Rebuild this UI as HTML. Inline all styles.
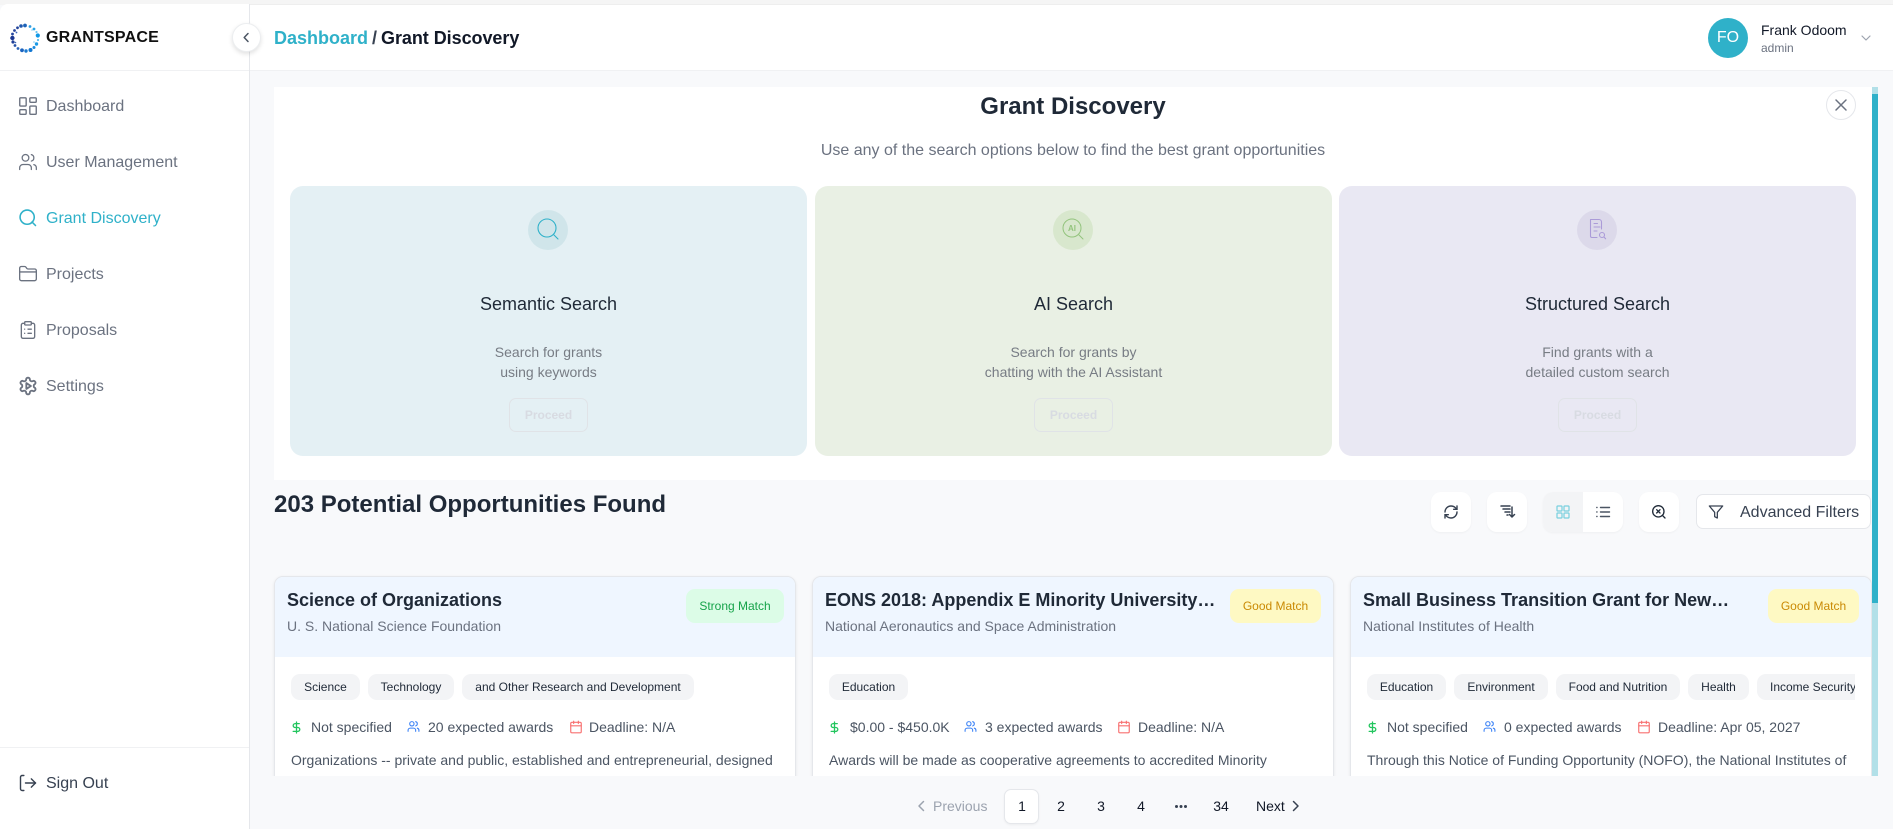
<!DOCTYPE html>
<html><head><meta charset="utf-8"><title>Grant Discovery</title>
<style>
*{box-sizing:border-box;margin:0;padding:0}
html,body{width:1893px;height:829px;overflow:hidden;background:#f8f9fb;font-family:"Liberation Sans",Arial,sans-serif}
.a{position:absolute;white-space:nowrap}
svg{position:absolute;fill:none;stroke-linecap:round;stroke-linejoin:round;overflow:visible}
.nav{left:46px;font-size:16px;line-height:24px;color:#6b7280}
.ico{stroke:#6b7280;stroke-width:2}
.sc{position:absolute;top:186px;height:270px;border-radius:13px}
.circ{position:absolute;top:24px;width:40px;height:40px;border-radius:50%}
.sct{position:absolute;left:0;right:0;top:106px;text-align:center;font-size:18px;line-height:24px;color:#1f2937}
.scd{position:absolute;left:0;right:0;top:156px;text-align:center;font-size:14px;line-height:20px;color:#777c84}
.pro{position:absolute;top:212px;height:34px;width:79px;border:1px solid #e0e3e7;border-radius:7px;text-align:center;font-size:12px;line-height:32px;color:#d8dbe2;font-weight:bold}
.tb{position:absolute;top:492px;width:40px;height:40px;background:#fff;border-radius:10px;box-shadow:0 1px 2px rgba(0,0,0,.04)}
.card{position:absolute;top:576px;height:220px;width:522px;background:#fff;border:1px solid #e5e7eb;border-radius:9px 9px 0 0;box-shadow:0 1px 3px rgba(0,0,0,.08)}
.hd{position:absolute;left:0;right:0;top:0;height:80px;background:#eff6ff;border-radius:8px 8px 0 0}
.t{position:absolute;top:12px;font-size:18px;line-height:22px;font-weight:bold;color:#1f2937;white-space:nowrap}
.ag{position:absolute;top:39px;font-size:14px;line-height:20px;color:#6b7280;white-space:nowrap}
.bd{position:absolute;top:12px;height:34px;border-radius:9px;font-size:12px;line-height:34px;text-align:center}
.s{background:#dcfce7;color:#16a34a}.g{background:#fef9c3;color:#ca8a04}
.tag{position:absolute;top:97px;height:26px;line-height:26px;background:#f3f4f6;border-radius:9px;font-size:12px;color:#1f2937;text-align:center;white-space:nowrap;overflow:hidden}
.m{position:absolute;top:140px;font-size:14px;line-height:20px;color:#4b5563;white-space:nowrap}
.d{position:absolute;top:173px;font-size:14px;line-height:20px;color:#4b5563;white-space:nowrap}
.p{position:absolute;top:794px;font-size:14px;line-height:24px;color:#111827;text-align:center;width:40px}
</style></head><body>
<div class="a" style="left:0;top:0;width:1893px;height:5px;background:#f5f5f5"></div>

<!-- sidebar -->
<div class="a" style="left:0;top:4px;width:250px;height:825px;background:#fff;border-right:1px solid #e5e7eb;border-top-left-radius:8px"></div>
<div class="a" style="left:250px;top:4px;width:1643px;height:67px;background:#fff;border-top:1px solid #eee"></div>
<div class="a" style="left:0;top:70px;width:249px;height:1px;background:#f0f1f3"></div>
<div class="a" style="left:250px;top:70px;width:1643px;height:1px;background:#f0f1f3"></div>

<!-- logo -->
<svg style="left:10px;top:23px" width="30" height="30" viewBox="0 0 30 30">
<g stroke="none">
<circle cx="15" cy="2.5" r="1.9" fill="#1d63b8"/><circle cx="20" cy="3.5" r="1.4" fill="#2f9be0"/><circle cx="24" cy="6" r="1.4" fill="#27a4e8"/><circle cx="26.5" cy="9" r="1.1" fill="#6cc4ee"/><circle cx="27.8" cy="12.5" r="2.1" fill="#0f97e6"/><circle cx="28" cy="17" r="1.1" fill="#56b9ec"/><circle cx="26.5" cy="21" r="1.7" fill="#1a9ae6"/><circle cx="24" cy="24.5" r="1.5" fill="#1889dd"/><circle cx="20.5" cy="27" r="2" fill="#1177d2"/><circle cx="16" cy="28" r="1.7" fill="#1a7ad0"/><circle cx="12" cy="27.3" r="1.9" fill="#1a63c0"/><circle cx="8" cy="25.5" r="1.4" fill="#2a63b6"/><circle cx="5" cy="22.5" r="1.4" fill="#2450a5"/><circle cx="3" cy="19" r="1.6" fill="#1f3f98"/><circle cx="2.4" cy="15" r="2.2" fill="#1c3791"/><circle cx="2.5" cy="11" r="1.4" fill="#26479f"/><circle cx="4.5" cy="7.5" r="1.4" fill="#27459c"/><circle cx="7.5" cy="4.8" r="1.4" fill="#25459c"/><circle cx="11" cy="3" r="1.8" fill="#1f57ad"/>
<circle cx="22" cy="7" r=".8" fill="#8fd3f2"/><circle cx="6.5" cy="9.5" r=".9" fill="#3b67b8"/><circle cx="5.5" cy="19.5" r=".8" fill="#3b67b8"/><circle cx="24" cy="19" r=".8" fill="#7cc8ee"/></g></svg>
<div class="a" style="left:46px;top:27.500px;font-size:16px;line-height:20px;font-weight:bold;color:#111;letter-spacing:.22px">GRANTSPACE</div>
<div class="a" style="left:231.500px;top:23px;width:29px;height:29px;border-radius:50%;background:#fff;border:1px solid #eceef0;box-shadow:0 2px 5px rgba(0,0,0,.12)"></div>
<svg style="left:239.500px;top:31px" width="13" height="13" viewBox="0 0 13 13"><path d="M8 2.500 4.200 6.500 8 10.500" stroke="#4b5563" stroke-width="1.500"/></svg>

<!-- nav -->
<svg class="ico" style="left:17px;top:95px" width="22" height="22" viewBox="0 0 24 24" stroke-width="1.500"><rect width="7" height="9" x="3" y="3" rx="1" stroke-width="1.500"/><rect width="7" height="5" x="14" y="3" rx="1" stroke-width="1.500"/><rect width="7" height="9" x="14" y="12" rx="1" stroke-width="1.500"/><rect width="7" height="5" x="3" y="16" rx="1" stroke-width="1.500"/></svg>
<div class="a nav" style="top:95px">Dashboard</div>
<svg style="left:18px;top:152px;stroke:#6b7280;stroke-width:1.500" width="20" height="20" viewBox="0 0 24 24"><path d="M16 21v-2a4 4 0 0 0-4-4H6a4 4 0 0 0-4 4v2"/><circle cx="9" cy="7" r="4"/><path d="M22 21v-2a4 4 0 0 0-3-3.870"/><path d="M16 3.130a4 4 0 0 1 0 7.750"/></svg>
<div class="a nav" style="top:151px">User Management</div>
<svg style="left:18px;top:208px;stroke:#2fb1c9;stroke-width:1.900" width="20" height="20" viewBox="0 0 24 24"><circle cx="11" cy="11" r="8.500"/><path d="m21 21-4.200-4.200"/></svg>
<div class="a nav" style="top:207px;color:#2fb1c9">Grant Discovery</div>
<svg style="left:18px;top:264px;stroke:#6b7280;stroke-width:1.600" width="20" height="20" viewBox="0 0 24 24"><path d="M20 20a2 2 0 0 0 2-2V8a2 2 0 0 0-2-2h-7.900a2 2 0 0 1-1.690-.9L9.600 3.900A2 2 0 0 0 7.930 3H4a2 2 0 0 0-2 2v13a2 2 0 0 0 2 2Z"/><path d="M2 9.500h20"/></svg>
<div class="a nav" style="top:263px">Projects</div>
<svg style="left:18px;top:320px;stroke:#6b7280;stroke-width:1.600" width="20" height="20" viewBox="0 0 24 24"><rect width="8" height="4" x="8" y="2" rx="1"/><path d="M16 4h2a2 2 0 0 1 2 2v14a2 2 0 0 1-2 2H6a2 2 0 0 1-2-2V6a2 2 0 0 1 2-2h2"/><path d="M12 11h4M12 16h4M8 11h.01M8 16h.01"/></svg>
<div class="a nav" style="top:319px">Proposals</div>
<svg style="left:18px;top:376px;stroke:#6b7280;stroke-width:2.200" width="20" height="20" viewBox="0 0 24 24"><path d="M12.220 2h-.44a2 2 0 0 0-2 2v.18a2 2 0 0 1-1 1.730l-.43.25a2 2 0 0 1-2 0l-.15-.08a2 2 0 0 0-2.730.73l-.22.38a2 2 0 0 0 .73 2.730l.15.1a2 2 0 0 1 1 1.720v.51a2 2 0 0 1-1 1.740l-.15.09a2 2 0 0 0-.73 2.730l.22.38a2 2 0 0 0 2.730.73l.15-.08a2 2 0 0 1 2 0l.43.25a2 2 0 0 1 1 1.730V20a2 2 0 0 0 2 2h.44a2 2 0 0 0 2-2v-.18a2 2 0 0 1 1-1.730l.43-.25a2 2 0 0 1 2 0l.15.08a2 2 0 0 0 2.730-.73l.22-.39a2 2 0 0 0-.73-2.730l-.15-.08a2 2 0 0 1-1-1.740v-.5a2 2 0 0 1 1-1.740l.15-.09a2 2 0 0 0 .73-2.730l-.22-.38a2 2 0 0 0-2.730-.73l-.15.08a2 2 0 0 1-2 0l-.43-.25a2 2 0 0 1-1-1.730V4a2 2 0 0 0-2-2z"/><path d="M10 8.500v7l5.500-3.500z"/></svg>
<div class="a nav" style="top:375px">Settings</div>

<div class="a" style="left:0;top:747px;width:249px;height:1px;background:#f0f1f3"></div>
<svg style="left:18px;top:773px;stroke:#374151;stroke-width:1.700" width="20" height="20" viewBox="0 0 24 24"><path d="M7 3H5a2 2 0 0 0-2 2v14a2 2 0 0 0 2 2h2"/><path d="m16 17 5-5-5-5"/><path d="M21 12H9"/></svg>
<div class="a nav" style="top:772px;color:#374151">Sign Out</div>

<!-- header -->
<div class="a" style="left:274px;top:27px;font-size:18px;line-height:22px;font-weight:bold;color:#2fb1c9">Dashboard</div>
<div class="a" style="left:372px;top:27px;font-size:18px;line-height:22px;font-weight:bold;color:#374151">/</div>
<div class="a" style="left:381px;top:27px;font-size:18px;line-height:22px;font-weight:bold;color:#111827;letter-spacing:-.05px">Grant Discovery</div>
<div class="a" style="left:1708px;top:18px;width:40px;height:40px;border-radius:50%;background:#2fb1c9;color:#fff;font-size:16px;line-height:40px;text-align:center">FO</div>
<div class="a" style="left:1761px;top:21px;font-size:14px;line-height:18px;color:#111827">Frank Odoom</div>
<div class="a" style="left:1761px;top:40px;font-size:12px;line-height:16px;color:#6b7280">admin</div>
<svg style="left:1861px;top:35px" width="10" height="6" viewBox="0 0 10 6"><path d="M1 1 5 5 9 1" stroke="#9ca3af" stroke-width="1.200"/></svg>

<!-- top panel -->
<div class="a" style="left:274px;top:87px;width:1598px;height:393px;background:#fff"></div>
<div class="a" style="left:274px;top:95px;width:1598px;text-align:center;font-size:24px;line-height:24px;font-weight:bold;color:#1f2937">Grant Discovery</div>
<div class="a" style="left:274px;top:141px;width:1598px;text-align:center;font-size:16px;line-height:20px;color:#6b7280">Use any of the search options below to find the best grant opportunities</div>
<div class="a" style="left:1826px;top:90px;width:30px;height:30px;border-radius:50%;background:#fff;border:1px solid #e5e7eb"></div>
<svg style="left:1835px;top:99px" width="12" height="12" viewBox="0 0 12 12"><path d="M1 1 11 11M11 1 1 11" stroke="#6b7280" stroke-width="1.500"/></svg>

<div class="sc" style="left:290px;width:517px;background:#e4f0f4">
 <div class="circ" style="left:238px;background:#d0e5ea"></div>
 <svg style="left:247px;top:32px;stroke:#2fb1c9;stroke-width:1.100" width="22" height="22" viewBox="0 0 22 22"><circle cx="10" cy="10" r="9"/><path d="m17 17 4 4"/></svg>
 <div class="sct">Semantic Search</div>
 <div class="scd">Search for grants<br>using keywords</div>
 <div class="pro" style="left:219px">Proceed</div>
</div>
<div class="sc" style="left:815px;width:517px;background:#e9f0e4">
 <div class="circ" style="left:238px;background:#d8e7cd"></div>
 <svg style="left:247px;top:32px;stroke:#93c47d;stroke-width:1" width="22" height="22" viewBox="0 0 22 22"><circle cx="10" cy="10" r="9"/><path d="m17 17 4 4"/><text x="10" y="13" text-anchor="middle" font-size="8" font-weight="bold" fill="#93c47d" stroke="none" font-family="Liberation Sans">AI</text></svg>
 <div class="sct">AI Search</div>
 <div class="scd">Search for grants by<br>chatting with the AI Assistant</div>
 <div class="pro" style="left:219px">Proceed</div>
</div>
<div class="sc" style="left:1339px;width:517px;background:#e9e8f3">
 <div class="circ" style="left:238px;background:#dcd9ea"></div>
 <svg style="left:248px;top:32px;stroke:#ab9bd8;stroke-width:1.100" width="20" height="22" viewBox="0 0 20 22"><path d="M14.500 11V4a2.500 2.500 0 0 0-2.500-2.500H3.500V18a1.500 1.500 0 0 0 1.500 1.500h5"/><path d="M7 5.500h3.500M7 9h6M7 13h3"/><circle cx="15" cy="17" r="2.500"/><path d="m17 19 1.600 1.800"/></svg>
 <div class="sct">Structured Search</div>
 <div class="scd">Find grants with a<br>detailed custom search</div>
 <div class="pro" style="left:219px">Proceed</div>
</div>

<!-- results heading -->
<div class="a" style="left:274px;top:490px;font-size:24px;line-height:30px;font-weight:bold;color:#1f2937">203 Potential Opportunities Found</div>

<!-- toolbar -->
<div class="tb" style="left:1431px"></div>
<svg style="left:1443px;top:504px;stroke:#374151;stroke-width:2.100" width="16" height="16" viewBox="0 0 24 24"><path d="M3 12a9 9 0 0 1 9-9 9.750 9.750 0 0 1 6.740 2.740L21 8"/><path d="M21 3v5h-5"/><path d="M21 12a9 9 0 0 1-9 9 9.750 9.750 0 0 1-6.740-2.740L3 16"/><path d="M8 16H3v5"/></svg>
<div class="tb" style="left:1487px"></div>
<svg style="left:1500px;top:505px;stroke:#374151;stroke-width:1.500" width="15" height="14" viewBox="0 0 15 14"><path d="M1 1h9M3 4h7M5 7h5M7 10h1"/><path d="M12 2v10M9.500 9.500 12 12l2.500-2.500"/></svg>
<div class="tb" style="left:1543px;width:80px"></div>
<div class="a" style="left:1543px;top:492px;width:40px;height:40px;background:#f3f4f6;border-radius:10px 0 0 10px"></div>
<svg style="left:1556px;top:505px;stroke:#77cfde;stroke-width:1.200" width="14" height="14" viewBox="0 0 14 14"><rect x="1" y="1" width="5" height="5" rx=".7"/><rect x="8" y="1" width="5" height="5" rx=".7"/><rect x="1" y="8" width="5" height="5" rx=".7"/><rect x="8" y="8" width="5" height="5" rx=".7"/></svg>
<svg style="left:1596px;top:505px;stroke:#4b5563;stroke-width:1.400" width="14" height="14" viewBox="0 0 14 14"><path d="M4.500 2.500h9M4.500 7h9M4.500 11.500h9M.8 2.500h.2M.8 7h.2M.8 11.500h.2"/></svg>
<div class="tb" style="left:1639px"></div>
<svg style="left:1651px;top:504px;stroke:#1f2937;stroke-width:2" width="16" height="16" viewBox="0 0 24 24"><circle cx="11" cy="11" r="8.500"/><path d="m21 21-4-4M8.500 8.500l5 5M13.500 8.500l-5 5"/></svg>
<div class="a" style="left:1696px;top:494px;width:175px;height:35px;background:#fff;border:1px solid #e5e7eb;border-radius:7px"></div>
<svg style="left:1708px;top:504px;stroke:#374151;stroke-width:1.900" width="16" height="16" viewBox="0 0 24 24"><path d="M22 3H2l8 9.460V19l4 2v-8.540L22 3z"/></svg>
<div class="a" style="left:1740px;top:503px;font-size:16px;line-height:20px;color:#374151">Advanced Filters</div>

<!-- cards, clipped -->
<div class="a" style="left:260px;top:560px;width:1612px;height:216px;overflow:hidden">
 <div style="position:absolute;left:-260px;top:-560px;width:1893px;height:829px">

 <div class="card" style="left:274px">
  <div class="hd"></div>
  <div class="t" style="left:12px">Science of Organizations</div>
  <div class="ag" style="left:12px">U. S. National Science Foundation</div>
  <div class="bd s" style="left:411px;width:98px">Strong Match</div>
  <div class="tag" style="left:16px;width:69px">Science</div>
  <div class="tag" style="left:93px;width:86px">Technology</div>
  <div class="tag" style="left:187px;width:232px">and Other Research and Development</div>
  <svg style="left:17px;top:144.500px;stroke:#22c55e;stroke-width:2.400" width="9" height="11" viewBox="4 2 16 20"><path d="M12 2v20"/><path d="M17 5H9.500a3.500 3.500 0 0 0 0 7h5a3.500 3.500 0 0 1 0 7H6"/></svg>
  <div class="m" style="left:36px">Not specified</div>
  <svg style="left:132px;top:143px;stroke:#3b82f6;stroke-width:2" width="13" height="13" viewBox="0 0 24 24"><path d="M16 21v-2a4 4 0 0 0-4-4H6a4 4 0 0 0-4 4v2"/><circle cx="9" cy="7" r="4"/><path d="M22 21v-2a4 4 0 0 0-3-3.870"/><path d="M16 3.130a4 4 0 0 1 0 7.750"/></svg>
  <div class="m" style="left:153px">20 expected awards</div>
  <svg style="left:294px;top:143px;stroke:#f87171;stroke-width:2" width="14" height="14" viewBox="0 0 24 24"><rect x="3" y="4" width="18" height="18" rx="2"/><path d="M16 2v4M8 2v4M3 10h18"/></svg>
  <div class="m" style="left:314px">Deadline: N/A</div>
  <div class="d" style="left:16px">Organizations -- private and public, established and entrepreneurial, designed</div>
 </div>

 <div class="card" style="left:812px">
  <div class="hd"></div>
  <div class="t" style="left:12px">EONS 2018: Appendix E Minority University…</div>
  <div class="ag" style="left:12px">National Aeronautics and Space Administration</div>
  <div class="bd g" style="left:417px;width:91px">Good Match</div>
  <div class="tag" style="left:16px;width:79px">Education</div>
  <svg style="left:17px;top:144.500px;stroke:#22c55e;stroke-width:2.400" width="9" height="11" viewBox="4 2 16 20"><path d="M12 2v20"/><path d="M17 5H9.500a3.500 3.500 0 0 0 0 7h5a3.500 3.500 0 0 1 0 7H6"/></svg>
  <div class="m" style="left:37px">$0.00 - $450.0K</div>
  <svg style="left:151px;top:143px;stroke:#3b82f6;stroke-width:2" width="13" height="13" viewBox="0 0 24 24"><path d="M16 21v-2a4 4 0 0 0-4-4H6a4 4 0 0 0-4 4v2"/><circle cx="9" cy="7" r="4"/><path d="M22 21v-2a4 4 0 0 0-3-3.870"/><path d="M16 3.130a4 4 0 0 1 0 7.750"/></svg>
  <div class="m" style="left:172px">3 expected awards</div>
  <svg style="left:304px;top:143px;stroke:#f87171;stroke-width:2" width="14" height="14" viewBox="0 0 24 24"><rect x="3" y="4" width="18" height="18" rx="2"/><path d="M16 2v4M8 2v4M3 10h18"/></svg>
  <div class="m" style="left:325px">Deadline: N/A</div>
  <div class="d" style="left:16px">Awards will be made as cooperative agreements to accredited Minority</div>
 </div>

 <div class="card" style="left:1350px">
  <div class="hd"></div>
  <div class="t" style="left:12px">Small Business Transition Grant for New…</div>
  <div class="ag" style="left:12px">National Institutes of Health</div>
  <div class="bd g" style="left:417px;width:91px">Good Match</div>
  <div class="tag" style="left:16px;width:79px">Education</div>
  <div class="tag" style="left:103px;width:94px">Environment</div>
  <div class="tag" style="left:205px;width:124px">Food and Nutrition</div>
  <div class="tag" style="left:337px;width:61px">Health</div>
  <div class="tag" style="left:406px;width:98px;border-radius:9px 0 0 9px;text-align:left;padding-left:13px">Income Security</div>
  <svg style="left:17px;top:144.500px;stroke:#22c55e;stroke-width:2.400" width="9" height="11" viewBox="4 2 16 20"><path d="M12 2v20"/><path d="M17 5H9.500a3.500 3.500 0 0 0 0 7h5a3.500 3.500 0 0 1 0 7H6"/></svg>
  <div class="m" style="left:36px">Not specified</div>
  <svg style="left:132px;top:143px;stroke:#3b82f6;stroke-width:2" width="13" height="13" viewBox="0 0 24 24"><path d="M16 21v-2a4 4 0 0 0-4-4H6a4 4 0 0 0-4 4v2"/><circle cx="9" cy="7" r="4"/><path d="M22 21v-2a4 4 0 0 0-3-3.870"/><path d="M16 3.130a4 4 0 0 1 0 7.750"/></svg>
  <div class="m" style="left:153px">0 expected awards</div>
  <svg style="left:286px;top:143px;stroke:#f87171;stroke-width:2" width="14" height="14" viewBox="0 0 24 24"><rect x="3" y="4" width="18" height="18" rx="2"/><path d="M16 2v4M8 2v4M3 10h18"/></svg>
  <div class="m" style="left:307px">Deadline: Apr 05, 2027</div>
  <div class="d" style="left:16px">Through this Notice of Funding Opportunity (NOFO), the National Institutes of</div>
 </div>
 </div>
</div>

<!-- scrollbar -->
<div class="a" style="left:1872px;top:87px;width:6px;height:689px;background:#b2e0e8"></div>
<div class="a" style="left:1872px;top:94px;width:6px;height:509px;background:#2fb1c9"></div>

<!-- pagination -->
<svg style="left:916px;top:800px" width="10" height="12" viewBox="0 0 10 12"><path d="M7.500 1.500 3 6l4.500 4.500" stroke="#9ca3af" stroke-width="1.500"/></svg>
<div class="a" style="left:933px;top:794px;font-size:14px;line-height:24px;color:#9ca3af">Previous</div>
<div class="a" style="left:1004px;top:789px;width:35px;height:35px;background:#fff;border:1px solid #e5e7eb;border-radius:7px;box-shadow:0 1px 2px rgba(0,0,0,.05)"></div>
<div class="p" style="left:1002px">1</div>
<div class="p" style="left:1041px">2</div>
<div class="p" style="left:1081px">3</div>
<div class="p" style="left:1121px">4</div>
<div class="a" style="left:1175px;top:805px;width:3px;height:3px;border-radius:50%;background:#374151;box-shadow:4.500px 0 0 #374151,9px 0 0 #374151"></div>
<div class="p" style="left:1201px">34</div>
<div class="a" style="left:1256px;top:794px;font-size:14px;line-height:24px;color:#111827">Next</div>
<svg style="left:1291px;top:800px" width="10" height="12" viewBox="0 0 10 12"><path d="M2.500 1.500 7 6l-4.500 4.500" stroke="#374151" stroke-width="1.500"/></svg>
</body></html>
